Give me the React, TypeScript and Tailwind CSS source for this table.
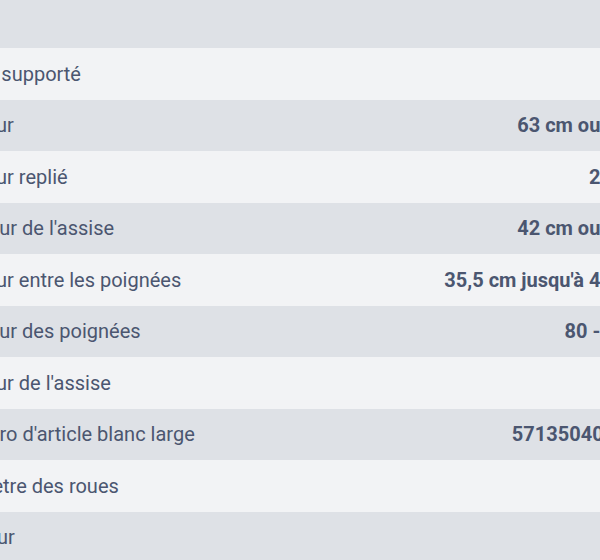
import React from "react";

const rows: [string, string][] = [
  ["Poids supporté", ""],
  ["Largeur", "63 cm ou 68 cm"],
  ["Largeur replié", "22,5 cm"],
  ["Hauteur de l'assise", "42 cm ou 47 cm"],
  ["Largeur entre les poignées", "35,5 cm jusqu'à 45,5 cm"],
  ["Hauteur des poignées", "80 - 95 cm"],
  ["Largeur de l'assise", ""],
  ["Numéro d'article blanc large", "5713504000015"],
  ["Diamètre des roues", ""],
  ["Couleur", ""],
];

export default function App() {
  return (
    <div
      className="w-[600px] h-[560px] overflow-hidden bg-[#f2f3f5]"
      style={{ fontFamily: "Roboto, 'Noto Sans', sans-serif" }}
    >
      <div className="w-[715px] -ml-[54px]">
        <div className="h-[48px] bg-[#dee1e6]" />
        {rows.map(([label, value], i) => (
          <div
            key={i}
            className={`h-[51.5px] flex items-center justify-between text-[20px] text-[#4b5670] ${
              i % 2 === 0 ? "bg-[#f2f3f5]" : "bg-[#dee1e6]"
            }`}
          >
            <span className="whitespace-nowrap">{label}</span>
            <span className="font-bold whitespace-nowrap">{value}</span>
          </div>
        ))}
      </div>
    </div>
  );
}
